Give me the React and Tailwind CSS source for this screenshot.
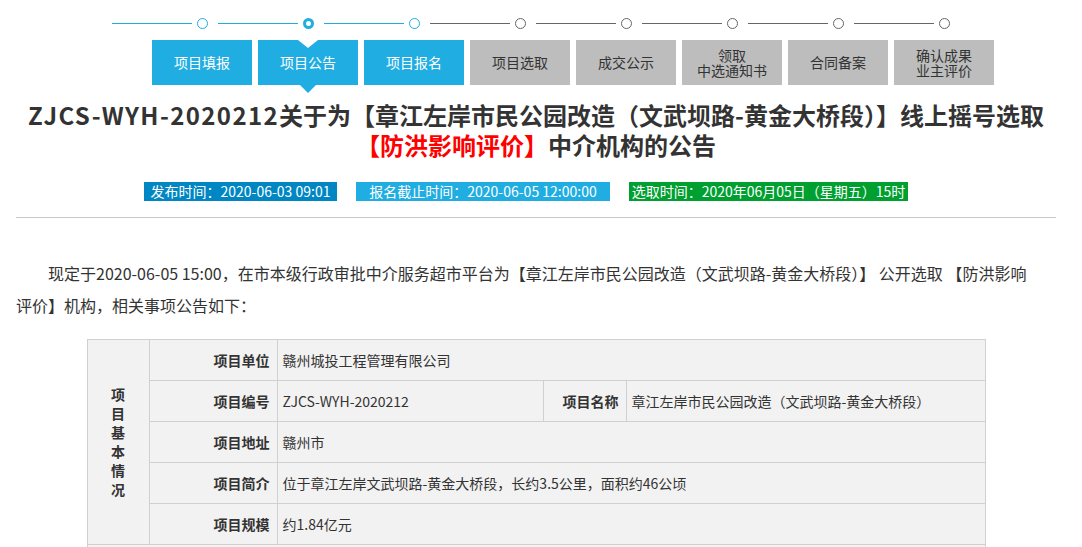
import React from "react";

const steps = [
  { label: "项目填报", done: true },
  { label: "项目公告", done: true, active: true },
  { label: "项目报名", done: true },
  { label: "项目选取" },
  { label: "成交公示" },
  { label: ["领取", "中选通知书"] },
  { label: "合同备案" },
  { label: ["确认成果", "业主评价"] },
];

const font = { fontFamily: '"Noto Sans CJK SC", "Noto Sans", sans-serif' };

const Steps = () => (
  <div className="pt-[17px]">
    <div className="flex items-center pl-[112px] h-[12px]">
      {steps.map((s, i) => (
        <div key={i} className="flex items-center">
          <div
            className={`w-[80px] h-px ${
              s.done ? "bg-[#1fade2]" : "bg-[#666]"
            }`}
          />
          <div
            className={`ml-[5px] mr-[10px] w-[11px] h-[11px] rounded-full ${
              s.done
                ? s.active
                  ? "border-[3px] border-[#1fade2]"
                  : "border-[1.5px] border-[#1fade2]"
                : "border-[1.5px] border-[#666]"
            }`}
          />
        </div>
      ))}
    </div>
    <div className="flex gap-[6px] pl-[152px] mt-[11px]">
      {steps.map((s, i) => (
        <div
          key={i}
          className={`relative w-[100px] h-[45px] flex flex-col items-center justify-center text-[14px] leading-[15px] ${
            s.done ? "bg-[#1fade2] text-white" : "bg-[#bdbdbd] text-[#333]"
          }`}
        >
          {Array.isArray(s.label) ? (
            s.label.map((l) => <span key={l}>{l}</span>)
          ) : (
            <span>{s.label}</span>
          )}
          {s.active && (
            <>
              <span className="absolute top-0 left-1/2 -translate-x-1/2 w-0 h-0 border-l-[10px] border-r-[10px] border-t-[8px] border-l-transparent border-r-transparent border-t-white" />
              <span className="absolute top-full left-1/2 -translate-x-1/2 w-0 h-0 border-l-[8px] border-r-[8px] border-t-[8px] border-l-transparent border-r-transparent border-t-[#1fade2]" />
            </>
          )}
        </div>
      ))}
    </div>
  </div>
);

const Label = ({ children }) => (
  <td className="border border-[#d0d0d0] text-right font-bold pr-[7px] whitespace-nowrap">
    {children}
  </td>
);

const Value = ({ children, colSpan }) => (
  <td colSpan={colSpan} className="border border-[#d0d0d0] pl-[5px] whitespace-nowrap">
    {children}
  </td>
);

export default function App() {
  return (
    <div className="bg-white min-h-screen text-[#333]" style={font}>
      <Steps />
      <div className="pl-[16px] pr-[26px]">
        <h1 className="mt-[15px] text-center text-[24px] leading-[30px] font-bold text-[#333]">
          <span className="tracking-[1.4px]">ZJCS-WYH-2020212</span>关于为【章江左岸市民公园改造（文武坝路-黄金大桥段）】线上摇号选取
          <br />
          <span className="text-[#ff0000]">【防洪影响评价】</span>中介机构的公告
        </h1>
        <div className="flex justify-center gap-[19px] mt-[22px] pr-[20px] text-[14px] leading-[19px] text-white text-center">
          <span className="bg-[#0087c3] w-[193px]">发布时间：2020-06-03 09:01</span>
          <span className="bg-[#1fade2] w-[254px]">报名截止时间：2020-06-05 12:00:00</span>
          <span className="bg-[#00a030] w-[279px]">选取时间：2020年06月05日（星期五）15时</span>
        </div>
        <div className="mt-[16px] h-px bg-[#c8c8c8]" />
        <p className="mt-[39px] text-[16px] leading-[32px] indent-[32px]">
          现定于2020-06-05 15:00，在市本级行政审批中介服务超市平台为【章江左岸市民公园改造（文武坝路-黄金大桥段）】 公开选取 【防洪影响
          <br />
          评价】机构，相关事项公告如下：
        </p>
        <table className="mt-[18px] mx-auto border-collapse bg-[#f2f2f2] text-[14px] w-[898px] table-fixed">
          <colgroup>
            <col className="w-[62px]" />
            <col className="w-[128px]" />
            <col className="w-[266px]" />
            <col className="w-[83px]" />
            <col className="w-[359px]" />
          </colgroup>
          <tbody>
            <tr className="h-[41px]">
              <td
                rowSpan={5}
                className="border border-[#d0d0d0] text-center font-bold leading-[19px]"
              >
                {"项目基本情况".split("").map((c) => (
                  <div key={c}>{c}</div>
                ))}
              </td>
              <Label>项目单位</Label>
              <Value colSpan={3}>赣州城投工程管理有限公司</Value>
            </tr>
            <tr className="h-[41px]">
              <Label>项目编号</Label>
              <Value>ZJCS-WYH-2020212</Value>
              <Label>项目名称</Label>
              <Value>章江左岸市民公园改造（文武坝路-黄金大桥段）</Value>
            </tr>
            <tr className="h-[41px]">
              <Label>项目地址</Label>
              <Value colSpan={3}>赣州市</Value>
            </tr>
            <tr className="h-[41px]">
              <Label>项目简介</Label>
              <Value colSpan={3}>位于章江左岸文武坝路-黄金大桥段，长约3.5公里，面积约46公顷</Value>
            </tr>
            <tr className="h-[41px]">
              <Label>项目规模</Label>
              <Value colSpan={3}>约1.84亿元</Value>
            </tr>
            <tr className="h-[41px]">
              <td className="border border-[#d0d0d0]" colSpan={5} />
            </tr>
          </tbody>
        </table>
      </div>
    </div>
  );
}
